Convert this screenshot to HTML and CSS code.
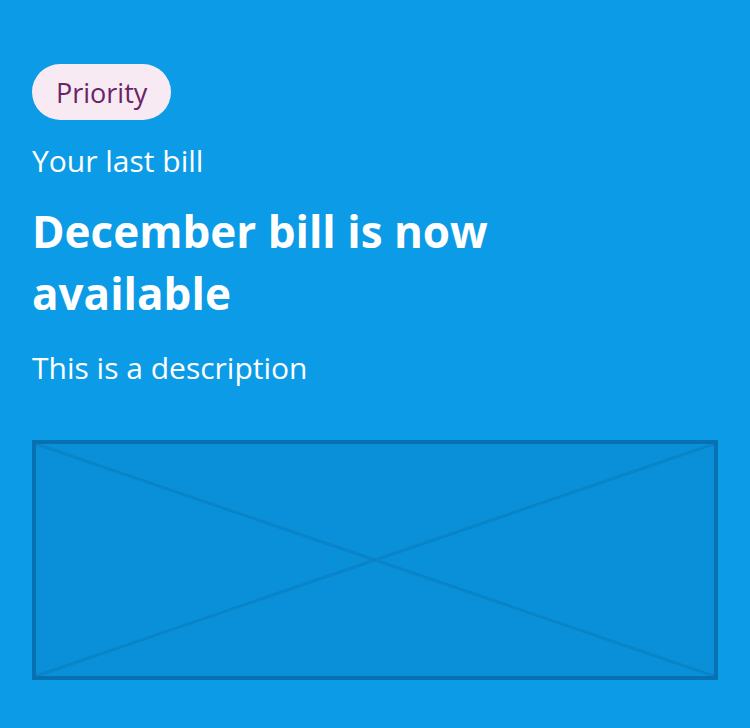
FILE: index.html
```html
<!DOCTYPE html>
<html lang="en">
<head>
<meta charset="utf-8">
<title>Bill card</title>
<link rel="stylesheet" href="styles.css">
</head>
<body>
<main class="card">
  <span class="badge">Priority</span>
  <p class="eyebrow">Your last bill</p>
  <h1 class="title">December bill is now available</h1>
  <p class="desc">This is a description</p>
  <div class="placeholder">
    <svg class="placeholder-x" viewBox="0 0 678 232" preserveAspectRatio="none" aria-hidden="true">
      <line x1="0" y1="0" x2="678" y2="232" />
      <line x1="678" y1="0" x2="0" y2="232" />
    </svg>
  </div>
</main>
</body>
</html>
```
FILE: styles.css
```css
html, body {
  margin: 0;
  padding: 0;
  background: #0b9be7;
}
body {
  font-family: "Open Sans", "Liberation Sans", sans-serif;
  color: #ffffff;
}
.card {
  display: flex;
  flex-direction: column;
  align-items: flex-start;
  padding: 64px 32px 48px;
}
.badge {
  display: inline-flex;
  align-items: center;
  height: 56px;
  padding: 0 24px;
  border-radius: 28px;
  background: #f8eaf3;
  color: #6b2368;
  font-size: 27px;
  box-sizing: border-box;
}
.eyebrow {
  margin: 21px 0 0;
  font-size: 30px;
  line-height: 40px;
}
.title {
  margin: 19px 0 0;
  max-width: 480px;
  font-size: 44px;
  line-height: 62px;
  font-weight: 700;
}
.desc {
  margin: 24px 0 0;
  font-size: 30px;
  line-height: 40px;
}
.placeholder {
  margin-top: 52px;
  align-self: stretch;
  height: 240px;
  box-sizing: border-box;
  border: 4px solid #0871b1;
  background: #0a90d9;
}
.placeholder-x {
  display: block;
  width: 100%;
  height: 100%;
}
.placeholder-x line {
  stroke: #0a84c8;
  stroke-width: 3;
  vector-effect: non-scaling-stroke;
}
```
